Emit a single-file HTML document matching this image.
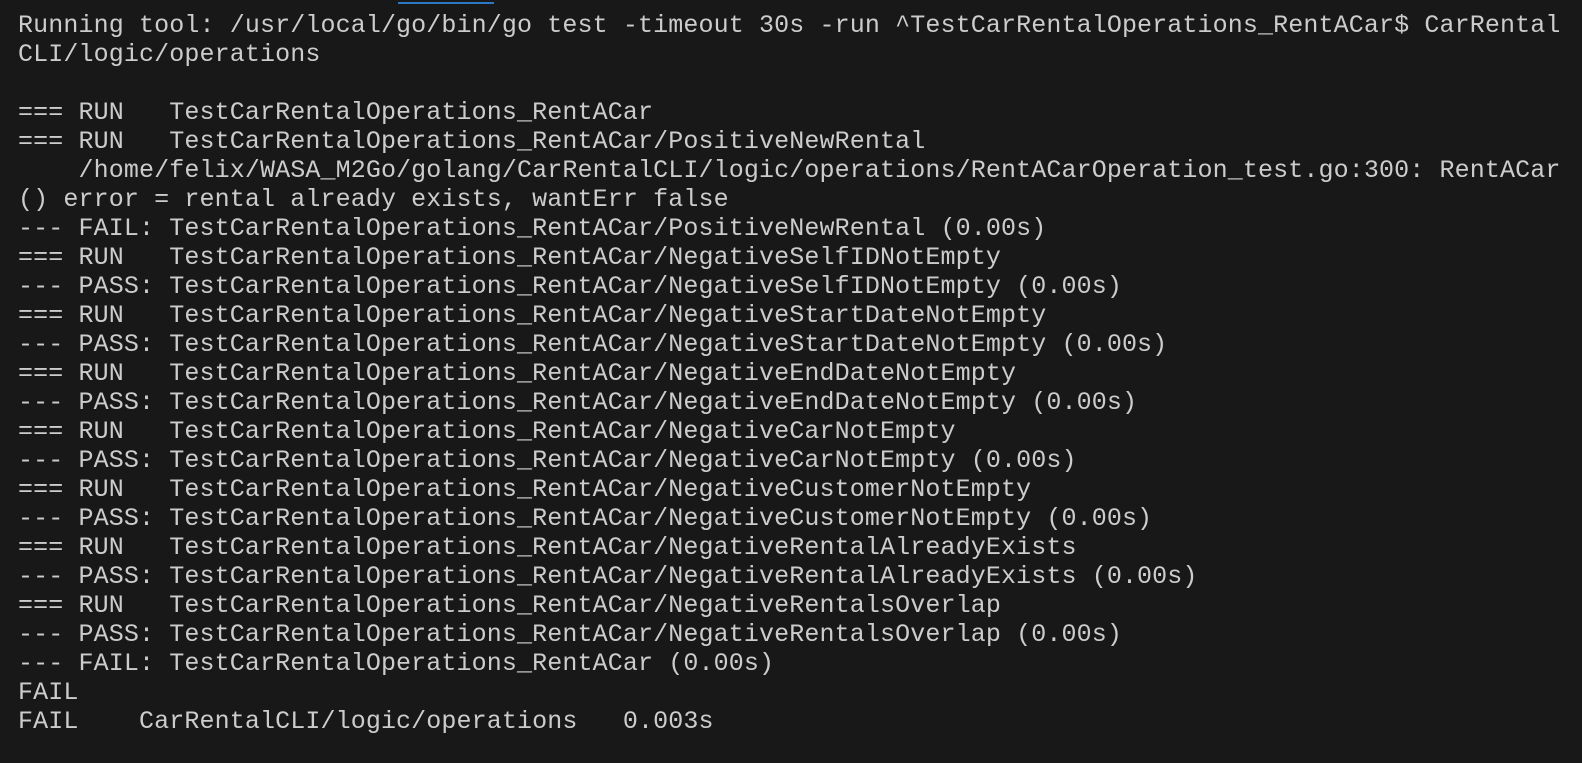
<!DOCTYPE html>
<html><head><style>
html,body{margin:0;padding:0;background:#181818;width:1582px;height:763px;overflow:hidden}
.bar{position:absolute;left:398px;top:2px;width:96px;height:2px;background:#2b79c2}
div.l{position:absolute;left:18px;margin:0;font-family:"Liberation Mono","Courier New",monospace;font-size:25px;line-height:29px;color:#cccccc;white-space:pre;letter-spacing:0.12px}
</style></head><body>
<div class="bar"></div>
<div class="l" style="top:11px">Running tool: /usr/local/go/bin/go test -timeout 30s -run ^TestCarRentalOperations_RentACar$ CarRental</div>
<div class="l" style="top:40px">CLI/logic/operations</div>
<div class="l" style="top:98px">=== RUN   TestCarRentalOperations_RentACar</div>
<div class="l" style="top:127px">=== RUN   TestCarRentalOperations_RentACar/PositiveNewRental</div>
<div class="l" style="top:156px">    /home/felix/WASA_M2Go/golang/CarRentalCLI/logic/operations/RentACarOperation_test.go:300: RentACar</div>
<div class="l" style="top:185px">() error = rental already exists, wantErr false</div>
<div class="l" style="top:214px">--- FAIL: TestCarRentalOperations_RentACar/PositiveNewRental (0.00s)</div>
<div class="l" style="top:243px">=== RUN   TestCarRentalOperations_RentACar/NegativeSelfIDNotEmpty</div>
<div class="l" style="top:272px">--- PASS: TestCarRentalOperations_RentACar/NegativeSelfIDNotEmpty (0.00s)</div>
<div class="l" style="top:301px">=== RUN   TestCarRentalOperations_RentACar/NegativeStartDateNotEmpty</div>
<div class="l" style="top:330px">--- PASS: TestCarRentalOperations_RentACar/NegativeStartDateNotEmpty (0.00s)</div>
<div class="l" style="top:359px">=== RUN   TestCarRentalOperations_RentACar/NegativeEndDateNotEmpty</div>
<div class="l" style="top:388px">--- PASS: TestCarRentalOperations_RentACar/NegativeEndDateNotEmpty (0.00s)</div>
<div class="l" style="top:417px">=== RUN   TestCarRentalOperations_RentACar/NegativeCarNotEmpty</div>
<div class="l" style="top:446px">--- PASS: TestCarRentalOperations_RentACar/NegativeCarNotEmpty (0.00s)</div>
<div class="l" style="top:475px">=== RUN   TestCarRentalOperations_RentACar/NegativeCustomerNotEmpty</div>
<div class="l" style="top:504px">--- PASS: TestCarRentalOperations_RentACar/NegativeCustomerNotEmpty (0.00s)</div>
<div class="l" style="top:533px">=== RUN   TestCarRentalOperations_RentACar/NegativeRentalAlreadyExists</div>
<div class="l" style="top:562px">--- PASS: TestCarRentalOperations_RentACar/NegativeRentalAlreadyExists (0.00s)</div>
<div class="l" style="top:591px">=== RUN   TestCarRentalOperations_RentACar/NegativeRentalsOverlap</div>
<div class="l" style="top:620px">--- PASS: TestCarRentalOperations_RentACar/NegativeRentalsOverlap (0.00s)</div>
<div class="l" style="top:649px">--- FAIL: TestCarRentalOperations_RentACar (0.00s)</div>
<div class="l" style="top:678px">FAIL</div>
<div class="l" style="top:707px">FAIL    CarRentalCLI/logic/operations   0.003s</div>
</body></html>
